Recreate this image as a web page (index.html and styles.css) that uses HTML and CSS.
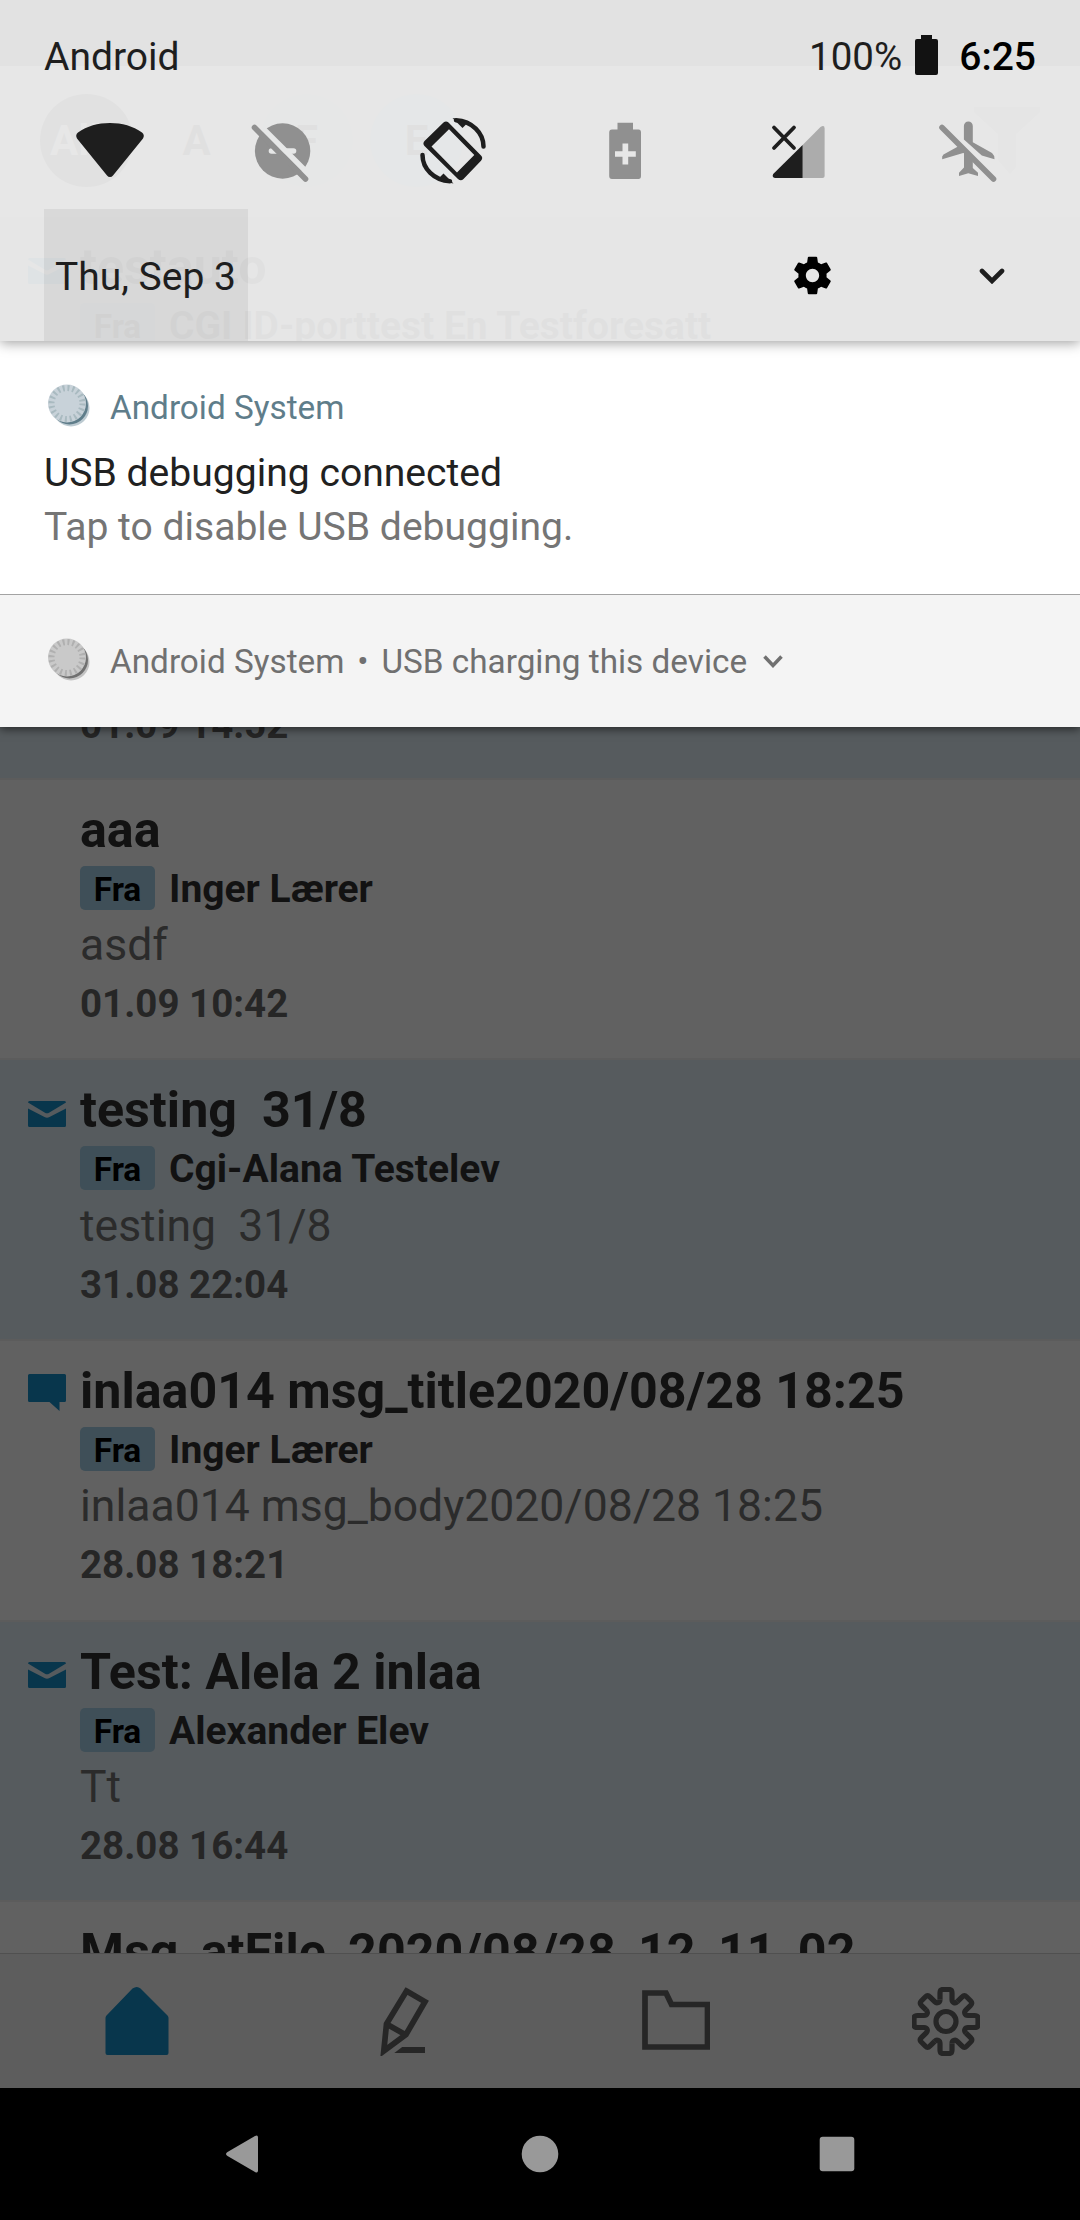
FILE: index.html
```html
<!DOCTYPE html>
<html lang="en">
<head>
<meta charset="utf-8">
<title>Notification shade</title>
<link rel="stylesheet" href="styles.css">
</head>
<body>
<svg class="defs" width="0" height="0" aria-hidden="true">
  <symbol id="mail" viewBox="0 0 38 37"><path d="M0 8.5Q0 7 1.500 7H36.500Q38 7 38 8.500L21 18.700Q19 19.800 17 18.700Z"/><path d="M0 14.500L16.500 23Q19 24.500 21.500 23L38 14.500V31.500Q38 33 36.500 33H1.500Q0 33 0 31.500Z"/></symbol>
  <symbol id="chat" viewBox="0 0 38 37"><path d="M1.500 0H36.500Q38 0 38 1.500V26.500Q38 28 36.500 28H31.500V37L21.500 28H1.500Q0 28 0 26.500V1.500Q0 0 1.500 0Z"/></symbol>
  <symbol id="coin" viewBox="0 0 44 44">
    <circle class="coin-rim" cx="23" cy="24" r="18.500"/>
    <circle class="coin-side" cx="21.500" cy="22" r="18.500"/>
    <circle class="coin-face" cx="19" cy="19.500" r="19"/>
    <circle class="coin-ticks" cx="19" cy="19.500" r="15.500"/>
  </symbol>
</svg>

<div class="phone">
  <main class="app">
    <div class="app-status"></div>
    <header class="filters">
      <span class="chip chip-all">Alle</span>
      <span class="chip chip-a">A</span>
      <span class="chip chip-f">F</span>
      <span class="chip chip-e">E</span>
      <svg class="funnel" viewBox="0 0 66 67"><path d="M0 0H66V5L42 27V60L36 67L24 53V27L0 5Z"/></svg>
    </header>

    <section class="list">
      <article class="row first unread">
        <svg class="mark"><use href="#mail"/></svg>
        <div class="text">
          <h2>testauto</h2>
          <p class="from"><span class="badge">Fra</span><b>CGI ID-porttest En Testforesatt</b></p>
        </div>
      </article>
      <article class="row unread">
        <span class="mark"></span>
        <div class="text last-line"><time>01.09 14:52</time></div>
      </article>
      <article class="row">
        <span class="mark"></span>
        <div class="text">
          <h2>aaa</h2>
          <p class="from"><span class="badge">Fra</span><b>Inger Lærer</b></p>
          <p class="body">asdf</p>
          <time>01.09 10:42</time>
        </div>
      </article>
      <article class="row unread">
        <svg class="mark"><use href="#mail"/></svg>
        <div class="text">
          <h2>testing  31/8</h2>
          <p class="from"><span class="badge">Fra</span><b>Cgi-Alana Testelev</b></p>
          <p class="body">testing  31/8</p>
          <time>31.08 22:04</time>
        </div>
      </article>
      <article class="row">
        <svg class="mark"><use href="#chat"/></svg>
        <div class="text">
          <h2>inlaa014 msg_title2020/08/28 18:25</h2>
          <p class="from"><span class="badge">Fra</span><b>Inger Lærer</b></p>
          <p class="body">inlaa014 msg_body2020/08/28 18:25</p>
          <time>28.08 18:21</time>
        </div>
      </article>
      <article class="row unread">
        <svg class="mark"><use href="#mail"/></svg>
        <div class="text">
          <h2>Test: Alela 2 inlaa</h2>
          <p class="from"><span class="badge">Fra</span><b>Alexander Elev</b></p>
          <p class="body">Tt</p>
          <time>28.08 16:44</time>
        </div>
      </article>
      <article class="row">
        <span class="mark"></span>
        <div class="text"><h2>Msg_atFile_2020/08/28_12_11_02</h2></div>
      </article>
    </section>

    <nav class="tabs">
      <svg class="tab home" viewBox="0 0 68 68"><path d="M29.500 1.500Q34 -1.500 37.500 1.500L64.500 28.500Q65.500 29.500 65.500 31V66Q65.500 68 63.500 68H4.500Q2.500 68 2.500 66V31Q2.500 29.500 3.500 28.500Z"/></svg>
      <svg class="tab pen" viewBox="0 0 48 69"><path class="line" d="M25.500 4L44 14.700L25 47.500L2.800 64L5.500 37ZM5.500 37L25 48"/><path d="M13.300 66L21.200 60H44V66Z"/></svg>
      <svg class="tab folder" viewBox="0 0 68 60"><path class="line" d="M3 3H24L29.500 14.500H65.500V57H3Z"/></svg>
      <svg class="tab" viewBox="-34 -34.500 68 69">
        <circle class="line thin" r="10"/>
        <g class="line thin">
          <path id="t" d="M-6 -22V-28.500Q-6 -32 -3 -32H3Q6 -32 6 -28.500V-22C6 -19 9 -17.500 11.300 -19.800"/>
          <use href="#t" transform="rotate(45)"/><use href="#t" transform="rotate(90)"/>
          <use href="#t" transform="rotate(135)"/><use href="#t" transform="rotate(180)"/>
          <use href="#t" transform="rotate(225)"/><use href="#t" transform="rotate(270)"/>
          <use href="#t" transform="rotate(315)"/>
        </g>
      </svg>
    </nav>
  </main>

  <footer class="navbar">
    <svg viewBox="0 0 44 44"><path d="M6.500 20L34 4Q37 2.500 37 5.500V38.500Q37 41.500 34 40L6.500 24Q3.500 22 6.500 20Z"/></svg>
    <svg viewBox="0 0 44 44"><circle cx="22" cy="22" r="18.300"/></svg>
    <svg viewBox="0 0 44 44"><rect x="4.700" y="4.700" width="34.600" height="34.600" rx="3"/></svg>
  </footer>

  <aside class="shade">
    <section class="quick">
      <div class="status">
        <span class="carrier">Android</span>
        <span class="percent">100%</span>
        <svg class="battery" viewBox="0 0 23 40"><path d="M6 0H17V4H21Q23 4 23 6V38Q23 40 21 40H2Q0 40 0 38V6Q0 4 2 4H6Z"/></svg>
        <span class="clock">6:25</span>
      </div>

      <div class="tiles">
        <svg viewBox="0 0 68 68"><path d="M34 60Q32.200 60 31 58.500L1 21.500Q-1 18 2 15.500C11 9 22 6 34 6S57 9 66 15.500Q69 18 67 21.500L37 58.500Q35.800 60 34 60Z"/></svg>
        <svg class="off" viewBox="0 0 68 68">
          <mask id="cut"><rect width="68" height="68" fill="#fff"/><path d="M-2 -5.500L70 66.500" stroke="#000" stroke-width="5.600"/><path d="M23.500 34H45.500" stroke="#000" stroke-width="5.600" stroke-linecap="round"/></mask>
          <circle cx="34.600" cy="34" r="27.700" mask="url(#cut)"/>
          <path class="slash" d="M6.500 10.500L57.500 62"/>
        </svg>
        <svg viewBox="0 0 68 68">
          <path fill-rule="evenodd" d="M24.500 5.500Q27 3.500 29.500 5.500L62 38.500Q64.500 41 62 43.700L44.500 62Q41.800 64.500 39 62L5.500 29Q3.300 26.500 5.500 24ZM30 12.300L12.500 29.500L38 55.500L55.300 38Z"/>
          <g id="arc"><path class="arc" d="M37 3.200C53 4 64.500 16 64.500 29.500"/><path d="M33.500 1L43.500 11L47 7.500L44 3Z"/></g>
          <use href="#arc" transform="rotate(180 34 33.700)"/>
        </svg>
        <svg class="off" viewBox="0 0 68 68"><path fill-rule="evenodd" d="M26.500 5.700H42V12.500H47.500Q50 12.500 50 15.500V59Q50 62 47.500 62H21Q18.200 62 18.200 59V15.500Q18.200 12.500 21 12.500H26.500ZM31.500 26.500V34.200H24V39.800H31.500V47.500H37.200V39.800H44.800V34.200H37.200V26.500Z"/></svg>
        <svg viewBox="-2.500 0 68 68"><path class="weak" d="M38.100 28L56 10Q60.100 7.500 60.100 11.500V59Q60.100 61 58 61H38.100Z"/><path d="M38.100 28V61H10.500Q7 60 8.700 57Z"/><path class="cross" d="M9.500 10.500L29.500 31M29.500 10.500L9.500 31"/></svg>
        <svg class="off" viewBox="0 0 68 68">
          <path d="M29.900 9A4.450 4.450 0 0 1 38.800 9V25.300L58 36Q60.500 38 60.500 42.300L47.800 38.500L29.900 22.500Z"/>
          <path d="M8.200 42.300Q7.500 39 9.500 37.500L24 29.500L38.800 44V51L44 55.700V59L34.300 56.300L25 59V55.700L30 50.500V35.700Z"/>
          <path class="slash" d="M8 10.500L59.500 62"/>
        </svg>
      </div>

      <div class="tools">
        <span class="date">Thu, Sep 3</span>
        <svg class="gear" viewBox="0 0 24 24"><path d="M19.140 12.940c.04-.3.06-.61.06-.94 0-.32-.02-.64-.07-.94l2.030-1.580c.18-.14.23-.41.12-.61l-1.920-3.320c-.12-.22-.37-.29-.59-.22l-2.390.96c-.5-.38-1.030-.7-1.620-.94l-.36-2.540c-.04-.24-.24-.41-.48-.41h-3.840c-.24 0-.43.17-.47.41l-.36 2.540c-.59.24-1.130.57-1.620.94l-2.390-.96c-.22-.08-.47 0-.59.22L2.740 8.870c-.12.21-.08.47.12.61l2.030 1.580c-.05.3-.09.63-.09.94s.02.64.07.94l-2.030 1.580c-.18.14-.23.41-.12.61l1.920 3.320c.12.22.37.29.59.22l2.390-.96c.5.38 1.030.7 1.620.94l.36 2.540c.05.24.24.41.48.41h3.840c.24 0 .44-.17.47-.41l.36-2.540c.59-.24 1.130-.56 1.620-.94l2.390.96c.22.08.47 0 .59-.22l1.920-3.320c.12-.22.07-.47-.12-.61l-2.010-1.580zM12 15.400c-1.900 0-3.400-1.500-3.400-3.400s1.500-3.400 3.400-3.400 3.400 1.500 3.400 3.400-1.500 3.400-3.400 3.400z"/></svg>
        <svg class="expand" viewBox="0 0 26 16"><path d="M3 3L13 13L23 3"/></svg>
      </div>
    </section>

    <section class="note">
      <div class="note-head"><svg class="coin blue"><use href="#coin"/></svg><span>Android System</span></div>
      <p class="note-title">USB debugging connected</p>
      <p class="note-body">Tap to disable USB debugging.</p>
    </section>

    <section class="note quiet">
      <div class="note-head"><svg class="coin gray"><use href="#coin"/></svg><span>Android System</span><span class="dot">•</span><span>USB charging this device</span>
        <svg class="more" viewBox="0 0 20 13"><path d="M1.500 1.500L10 10.500L18.500 1.500"/></svg></div>
    </section>
  </aside>
</div>
</body>
</html>
```
FILE: styles.css
```css
* { box-sizing: border-box; margin: 0; padding: 0; }
body { background: #000; font-family: Roboto, sans-serif; }
.defs { position: absolute; }
.phone { position: relative; width: 1080px; height: 2220px; overflow: hidden; display: flex; flex-direction: column; }
svg { display: block; flex: none; }

/* Dimmed app underneath the shade */
.app { height: 2088px; display: flex; flex-direction: column; background: #616161; }
.app-status { flex: none; height: 66px; background: #2e2e2e; }
.filters { flex: none; height: 151.300px; padding: 0 40px 2px; display: flex; align-items: center; gap: 17px; background: #686868; }
.chip { width: 93px; height: 93px; border-radius: 50%; display: flex; align-items: center; justify-content: center; font-size: 42px; font-weight: 700; color: #121212; }
.chip-all { background: #202020; color: #686868; }
.chip-a { background: #6c6262; }
.chip-f { background: #606c66; }
.chip-e { background: #52686e; }
.funnel { width: 66px; height: 67px; margin-left: auto; fill: #4a4a4a; }

.list { flex: 1; min-height: 0; overflow: hidden; }
.row { height: 280.670px; padding: 20px 0 0 28px; display: flex; gap: 14px; background: #616161; border-bottom: 2.700px solid #5c5c5c; }
.row.first { height: 281.670px; }
.row.unread { background: #565b5e; }
.mark { flex: none; width: 38px; height: 37px; margin-top: 13.500px; fill: #08364c; }
.text { display: flex; flex-direction: column; white-space: pre; }
h2 { font-size: 50.200px; line-height: 60px; color: #121212; }
.from { height: 44px; margin-top: 6px; display: flex; gap: 14px; font-size: 39px; line-height: 47px; color: #121212; }
.badge { width: 75px; height: 44px; border-radius: 5px; text-align: center; background: #3f4f58; color: #000; font-size: 33.500px; font-weight: 700; }
.body { margin-top: 8.500px; font-size: 44.500px; line-height: 54px; color: #2b2b2b; }
time { margin-top: 9px; font-size: 38.500px; line-height: 46px; font-weight: 700; color: #262626; }
.last-line { justify-content: flex-end; padding-bottom: 30px; }

.tabs { flex: none; height: 135px; padding: 0 100px 0 102.500px; border-top: 1px solid #505050; background: #5d5d5d; display: flex; align-items: center; justify-content: space-between; }
.tab { width: 68px; height: 69px; fill: #262626; }
.tab.home { height: 68px; fill: #08364c; }
.tab.pen { margin-left: -2px; }
.tab.folder { height: 60px; margin-top: -3px; }
.line { fill: none; stroke: #262626; stroke-width: 5.700; }
.thin { stroke-width: 5.200; }

.navbar { height: 132px; padding: 0 221px; display: flex; align-items: center; justify-content: space-between; background: #000; }
.navbar svg { width: 44px; height: 44px; fill: #999; }

/* Shade pulled down over the app */
.shade { position: absolute; left: 0; top: 0; width: 1080px; box-shadow: 0 2px 9px rgba(0, 0, 0, .6); }
.quick { position: relative; z-index: 1; height: 341px; display: flex; flex-direction: column; background: rgba(242, 242, 242, .92); box-shadow: 0 2px 12px rgba(0, 0, 0, .38); color: #1e1e1e; font-size: 39px; }
.status { height: 117px; padding: 34px 44px 0; display: flex; line-height: 46px; }
.percent { margin-left: auto; font-size: 38.500px; }
.battery { width: 23px; height: 40px; margin: 1px 21px 0 13px; fill: #121212; }
.clock { color: #000; font-weight: 500; }
.tiles { height: 92px; padding: 0 78px 0 76px; display: flex; justify-content: space-between; }
.tiles svg { width: 68px; height: 68px; fill: #1e1e1e; overflow: visible; }
.tiles .off { fill: #909090; }
.slash { stroke: #909090; stroke-width: 5.600; stroke-linecap: round; }
.arc { fill: none; stroke: #1e1e1e; stroke-width: 4.500; stroke-linecap: round; }
.weak { fill: #acacac; }
.cross { stroke: #1e1e1e; stroke-width: 3.800; stroke-linecap: round; }
.tools { height: 132px; padding: 0 75px 0 44px; display: flex; align-items: center; }
.date { width: 204px; height: 132px; padding: 2px 0 0 11px; line-height: 132px; background: rgba(0, 0, 0, .057); white-space: nowrap; }
.gear { width: 47px; height: 47px; margin-left: 540.500px; fill: #000; }
.expand { width: 26px; height: 16px; margin-left: auto; margin-top: 1px; fill: none; stroke: #1e1e1e; stroke-width: 4.600; stroke-linecap: round; }

.note { height: 254px; padding: 42px 44px 0; background: #fff; border-bottom: 1px solid #a3a3a3; }
.note-head { height: 46px; display: flex; align-items: center; color: #5f7d8a; font-size: 33.300px; line-height: 43px; }
.note-head span { padding-top: 3px; }
.coin { width: 44px; height: 44px; margin: 0 18px 0 4px; }
.coin-ticks { fill: none; stroke: var(--tick); stroke-width: 6; stroke-dasharray: 2 2.870; }
.coin-rim { fill: var(--rim); }
.coin-side { fill: var(--side); }
.coin-face { fill: var(--face); }
.blue { --rim: #bccad1; --side: #5f7d8a; --face: #c8d2d9; --tick: #a9bac0; }
.gray { --rim: #c3c3c3; --side: #707070; --face: #c9c9c9; --tick: #b0b0b0; }
.note-title { margin-top: 21px; font-size: 39.100px; line-height: 46px; color: #212121; }
.note-body { margin-top: 8px; font-size: 39.100px; line-height: 46px; color: #757575; }
.quiet { height: 132px; background: #f4f4f4; border: 0; }
.quiet .note-head { color: #707070; }
.dot { width: 37px; text-align: center; }
.more { width: 20px; height: 13px; margin: 3px 0 0 16px; fill: none; stroke: #707070; stroke-width: 3.500; }
```
